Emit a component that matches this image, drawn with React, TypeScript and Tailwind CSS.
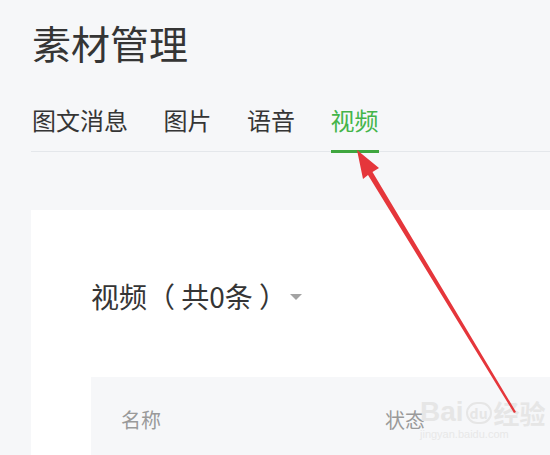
const cjk = { fontFamily: '"Noto Sans CJK SC", "Noto Sans", sans-serif' };

const tabs = ["图文消息", "图片", "语音", "视频"];

function Arrow() {
  // annotation arrow drawn over the page
  return (
    <svg
      className="pointer-events-none absolute left-0 top-0"
      width="550"
      height="455"
      viewBox="0 0 550 455"
    >
      <polygon
        points="357,150 379,168 372.5,172 516,412 514,413 368,175 363,179"
        fill="#e5363b"
      />
    </svg>
  );
}

function Watermark() {
  return (
    <div className="pointer-events-none absolute left-[420px] top-[398px] flex flex-col items-start">
      <div className="flex items-end gap-[2px] leading-none text-[#e6e6e6]">
        <span className="text-[28px] font-bold" style={{ fontFamily: '"Liberation Sans", sans-serif' }}>
          Bai
        </span>
        <span className="mb-[2px] flex h-[22px] w-[26px] items-center justify-center rounded-full border-2 border-[#e6e6e6] text-[14px] font-bold">
          du
        </span>
        <span className="text-[26px] font-bold" style={cjk}>
          经验
        </span>
      </div>
      <span className="mt-[3px] text-[11px] leading-none text-[#e8e8e8]" style={{ fontFamily: '"Liberation Sans", sans-serif' }}>
        jingyan.baidu.com
      </span>
    </div>
  );
}

export default function App() {
  const active = "视频";

  return (
    <div className="relative h-[455px] w-[550px] overflow-hidden bg-[#f6f7f9]" style={cjk}>
      <div className="pl-[31px] pt-[23px]">
        <h1 className="pl-[1px] text-[39px] font-normal leading-none text-[#353535]">素材管理</h1>

        <nav className="mt-[46px] flex gap-[35.5px] border-b border-[#e4e7eb] pl-[1px]">
          {tabs.map((t) => (
            <div
              key={t}
              className={
                t === active
                  ? "-mb-[2px] border-b-[3px] border-[#3fa63f] pb-[18px] text-[24px] leading-none text-[#44b549]"
                  : "-mb-[2px] border-b-[3px] border-transparent pb-[18px] text-[24px] leading-none text-[#353535]"
              }
            >
              {t}
            </div>
          ))}
        </nav>

        <section className="mt-[58px] bg-white pl-[60px] pt-[72px] pb-[40px]">
          <div className="flex items-center gap-[3px]">
            <h2 className="text-[28px] font-normal leading-none text-[#353535]">视频（ 共0条 ）</h2>
            <span className="mt-[2px] h-0 w-0 border-x-[6px] border-t-[6px] border-x-transparent border-t-[#a3a3a3]" />
          </div>

          <div className="mt-[67px] flex bg-[#f6f7f9] pl-[30px] pt-[33px] pb-[30px] text-[20px] leading-none text-[#9a9a9a]">
            <div className="w-[264px]">名称</div>
            <div>状态</div>
          </div>
        </section>
      </div>

      <Watermark />
      <Arrow />
    </div>
  );
}
